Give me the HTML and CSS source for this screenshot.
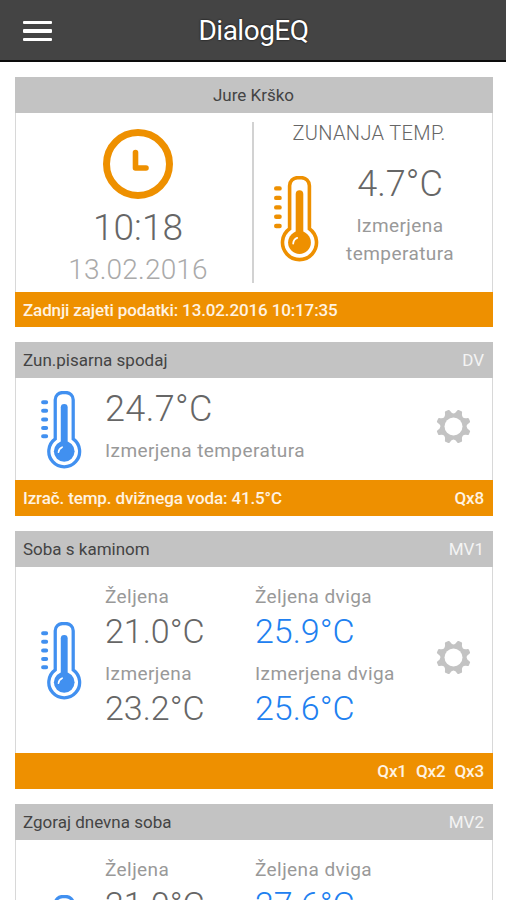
FILE: index.html
```html
<!DOCTYPE html>
<html lang="sl">
  <head>
    <meta charset="UTF-8">
    <title>DialogEQ</title>
    <link rel="stylesheet" href="styles.css">
  </head>
  <body>
    <svg class="defs" width="0" height="0">
      <symbol id="thermometer" viewBox="0 0 45 86">
        <path d="M15.6 52.8V9.7a8 8 0 0 1 8-8h3.8a8 8 0 0 1 8 8v43.1a17 17 0 1 1-19.8 0z" fill="none" stroke="currentColor" stroke-width="3.6"/>
        <circle cx="25.5" cy="66.5" r="11.4" fill="currentColor"/>
        <path d="M25.5 60V18" stroke="currentColor" stroke-width="7.6" stroke-linecap="round"/>
        <path d="M19.2 67.500a6.500 6.500 0 0 1 4-5.600" fill="none" stroke="#fff" stroke-width="1.800" stroke-linecap="round"/>
        <path d="M2.200 12.400h3.400M2.200 21.900h3.400M2.200 31.400h3.400M2.200 40.700h3.400M2.200 50h3.400" stroke="currentColor" stroke-width="4.400" stroke-linecap="round"/>
      </symbol>
      <symbol id="gear" viewBox="-17.5 -17.5 35 35">
        <path d="M-4.8-15.6Q0-8.6 4.8-15.6L7.6-14.4Q6.1-6.100 14.400-7.600L15.600-4.800Q8.600 0 15.600 4.800L14.400 7.600Q6.100 6.100 7.600 14.400L4.800 15.600Q0 8.600-4.800 15.600L-7.600 14.400Q-6.100 6.100-14.400 7.600L-15.600 4.800Q-8.600 0-15.600-4.800L-14.400-7.600Q-6.100-6.100-7.600-14.400z" fill="currentColor" stroke="currentColor" stroke-width="2" stroke-linejoin="round"/>
        <circle r="9" fill="#fff"/>
      </symbol>
    </svg>

    <header class="navbar">
      <button class="menu"><i></i><i></i><i></i></button>
      <h1>DialogEQ</h1>
    </header>

    <main>
      <section class="card overview">
        <div class="card-head">Jure Krško</div>
        <div class="card-body">
          <div class="now">
            <svg class="clock" viewBox="0 0 70 70">
              <circle cx="35" cy="35" r="31.5" fill="none" stroke="currentColor" stroke-width="7"/>
              <path d="M32.5 23.5v15.500h10.500" fill="none" stroke="currentColor" stroke-width="5.600" stroke-linecap="round" stroke-linejoin="round"/>
            </svg>
            <div class="time">10:18</div>
            <div class="date">13.02.2016</div>
          </div>
          <div class="outside">
            <h2>ZUNANJA TEMP.</h2>
            <div class="outside-row">
              <svg class="thermo"><use href="#thermometer"/></svg>
              <div class="reading">
                <div class="value">4.7°C</div>
                <div class="label">Izmerjena<br>temperatura</div>
              </div>
            </div>
          </div>
        </div>
        <div class="card-foot">Zadnji zajeti podatki: 13.02.2016 10:17:35</div>
      </section>

      <section class="card single">
        <div class="card-head"><span>Zun.pisarna spodaj</span><em>DV</em></div>
        <div class="card-body">
          <svg class="thermo"><use href="#thermometer"/></svg>
          <div class="reading">
            <div class="value">24.7°C</div>
            <div class="label">Izmerjena temperatura</div>
          </div>
          <svg class="gear"><use href="#gear"/></svg>
        </div>
        <div class="card-foot"><span>Izrač. temp. dvižnega voda: 41.5°C</span><em>Qx8</em></div>
      </section>

      <section class="card room">
        <div class="card-head"><span>Soba s kaminom</span><em>MV1</em></div>
        <div class="card-body">
          <svg class="thermo"><use href="#thermometer"/></svg>
          <div class="readings">
            <div class="reading">
              <div class="label">Željena</div>
              <div class="value">21.0°C</div>
            </div>
            <div class="reading lift">
              <div class="label">Željena dviga</div>
              <div class="value">25.9°C</div>
            </div>
            <div class="reading">
              <div class="label">Izmerjena</div>
              <div class="value">23.2°C</div>
            </div>
            <div class="reading lift">
              <div class="label">Izmerjena dviga</div>
              <div class="value">25.6°C</div>
            </div>
          </div>
          <svg class="gear"><use href="#gear"/></svg>
        </div>
        <div class="card-foot"><span></span><em>Qx1</em><em>Qx2</em><em>Qx3</em></div>
      </section>

      <section class="card room">
        <div class="card-head"><span>Zgoraj dnevna soba</span><em>MV2</em></div>
        <div class="card-body">
          <svg class="thermo"><use href="#thermometer"/></svg>
          <div class="readings">
            <div class="reading">
              <div class="label">Željena</div>
              <div class="value">21.0°C</div>
            </div>
            <div class="reading lift">
              <div class="label">Željena dviga</div>
              <div class="value">27.6°C</div>
            </div>
          </div>
        </div>
      </section>
    </main>
  </body>
</html>
```
FILE: styles.css
```css
html, body {
  height: 100%;
  margin: 0;
  overflow: hidden;
  font-family: Roboto, "Liberation Sans", sans-serif;
  color: #666;
  background: #fff;
}
* {
  box-sizing: border-box;
}
svg {
  display: block;
  flex: none;
}
em {
  font-style: normal;
}
.defs {
  display: none;
}
.navbar {
  display: grid;
  grid-template-columns: 76px 1fr 76px;
  align-items: center;
  height: 62px;
  background: #444;
  border-bottom: 2px solid #0c0c0c;
}
.menu {
  display: flex;
  flex-direction: column;
  gap: 5px;
  width: 29px;
  margin: 2px 0 0 23px;
  padding: 0;
  border: none;
  background: none;
}
.menu i {
  height: 3.5px;
  border-radius: 1px;
  background: #fff;
}
.navbar h1 {
  margin: 2px 0 0 1px;
  font-size: 28px;
  font-weight: 400;
  line-height: 58px;
  letter-spacing: -0.5px;
  text-align: center;
  color: #fff;
  text-shadow: 0 0 2px #000;
}
main {
  display: flex;
  flex-direction: column;
  gap: 15px;
  width: 478px;
  margin: 15px 0 0 15px;
}
.card {
  flex: none;
}
.card-head, .card-foot {
  display: flex;
  align-items: center;
  gap: 9px;
  height: 36px;
  padding: 0 9px 1px 8px;
  font-size: 17px;
  white-space: nowrap;
}
.card-head {
  color: #444;
  background: #c3c3c3;
}
.card-foot {
  padding-bottom: 0;
  font-weight: 500;
  letter-spacing: -0.13px;
  color: #fff3e2;
  background: #ee9000;
}
.card-head span, .card-foot span {
  flex: 1;
}
.card-head em {
  color: #f4f4f4;
}
.card-body {
  display: flex;
  align-items: center;
  border: 1px solid #d8d8d8;
  border-width: 0 1px;
}
.label {
  font-size: 19px;
  line-height: 28px;
  letter-spacing: 0.42px;
  color: #999;
}
.value {
  font-size: 36px;
  font-weight: 300;
}
.thermo {
  width: 41px;
  height: 78px;
  margin-top: 2px;
  color: #4190f0;
}
.gear {
  width: 35px;
  height: 35px;
  margin: 0 21px 5px auto;
  color: #c3c3c3;
}

/* clock + outside temperature */
.overview .card-head {
  justify-content: center;
}
.overview .card-body {
  align-items: stretch;
  height: 179px;
}
.overview .card-foot {
  height: 35px;
}
.now {
  width: 238px;
  margin: 9px 0;
  padding: 7px 0 0 8px;
  border-right: 2px solid #d2d2d2;
  text-align: center;
}
.clock {
  width: 70px;
  height: 70px;
  margin: 0 auto;
  color: #ee9000;
}
.time {
  margin-top: 8px;
  font-size: 37px;
  font-weight: 300;
  line-height: 42px;
}
.date {
  font-size: 28px;
  font-weight: 300;
  line-height: 42px;
  letter-spacing: 0.2px;
  color: #aaa;
}
.outside {
  flex: 1;
}
.outside h2 {
  margin: 0;
  padding-right: 8px;
  font-size: 20px;
  font-weight: 300;
  line-height: 40px;
  letter-spacing: 0.35px;
  text-align: center;
}
.outside-row {
  display: flex;
  padding-left: 20px;
}
.outside .thermo {
  width: 45px;
  height: 86px;
  margin-top: 23px;
  color: #ee9000;
}
.outside .reading {
  width: 162px;
  text-align: center;
}
.outside .value {
  margin-top: 9px;
  line-height: 44px;
}
.outside .label {
  padding-top: 6px;
}

/* one measured value */
.single .card-body {
  height: 102px;
  padding-left: 25px;
}
.single .reading {
  margin: 0 0 2px 23px;
}
.single .value {
  line-height: 46px;
  letter-spacing: 0.4px;
}
.single .label {
  line-height: 38px;
}

/* wanted and measured values */
.room .card-body {
  height: 186px;
  padding-left: 25px;
}
.readings {
  display: grid;
  grid-template-columns: 150px 150px;
  align-self: flex-start;
  row-gap: 8px;
  margin: 15px 0 0 23px;
}
.room .label {
  line-height: 30px;
}
.room .value {
  font-size: 34px;
  line-height: 39px;
}
.lift .value {
  color: #2080f0;
}
```
